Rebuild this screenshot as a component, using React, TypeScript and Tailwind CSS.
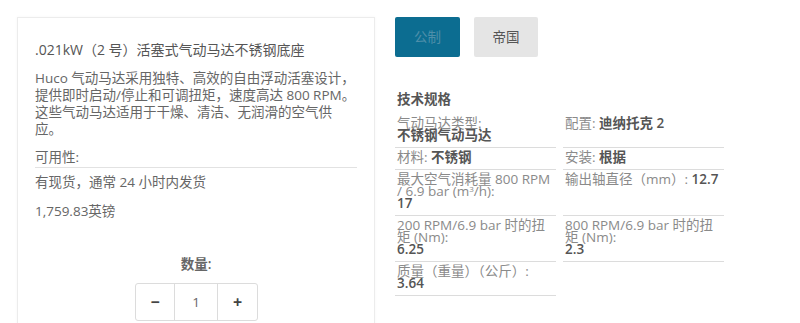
const font = { fontFamily: '"Open Sans", "Noto Sans CJK SC", sans-serif' };

type Spec = { label: React.ReactNode; value: string; block?: boolean };

const specs: (Spec | null)[][] = [
  [
    { label: '气动马达类型:', value: '不锈钢气动马达', block: true },
    { label: '配置:', value: '迪纳托克 2' },
  ],
  [
    { label: '材料:', value: '不锈钢' },
    { label: '安装:', value: '根据' },
  ],
  [
    {
      label: (
        <>
          最大空气消耗量 800 RPM
          <br />/ 6.9 bar (m<sup className="text-[8px]">3</sup>/h):
        </>
      ),
      value: '17',
      block: true,
    },
    { label: '输出轴直径（mm）:', value: '12.7' },
  ],
  [
    {
      label: (
        <>
          200 RPM/6.9 bar 时的扭
          <br />矩 (Nm):
        </>
      ),
      value: '6.25',
      block: true,
    },
    {
      label: (
        <>
          800 RPM/6.9 bar 时的扭
          <br />矩 (Nm):
        </>
      ),
      value: '2.3',
      block: true,
    },
  ],
  [{ label: '质量（重量）（公斤）:', value: '3.64', block: true }, null],
];

function SpecCell({ spec }: { spec: Spec | null }) {
  if (!spec) return <div className="w-[161px]" />;
  return (
    <div className="w-[161px] border-b border-[#dcdcdc] pl-[2px] pt-[3px] pb-[6px] text-[13.5px] leading-[12px]">
      <span className="text-[#8a8a8a]">{spec.label}</span>{' '}
      <span className={`font-semibold text-[#555] ${spec.block ? 'block' : ''}`}>{spec.value}</span>
    </div>
  );
}

export default function App() {
  return (
    <div className="flex h-[323px] w-[800px] overflow-hidden bg-white" style={font}>
      <div className="ml-[17px] mt-[17px] h-[340px] w-[358px] border border-[#ececec] bg-white px-[17px] pt-[23px] shadow-[0_0_3px_rgba(0,0,0,0.04)]">
        <h1 className="text-[14px] leading-[17px] text-[#555]">.021kW（2 号）活塞式气动马达不锈钢底座</h1>
        <p className="mt-[12px] whitespace-nowrap text-[13.5px] leading-[17px] text-[#666]">
          Huco 气动马达采用独特、高效的自由浮动活塞设计，
          <br />
          提供即时启动/停止和可调扭矩，速度高达 800 RPM。
          <br />
          这些气动马达适用于干燥、清洁、无润滑的空气供
          <br />
          应。
        </p>
        <div className="mt-[11px] border-b border-[#e2e2e2] pb-[1px] text-[13.5px] leading-[17px] text-[#666]">可用性:</div>
        <div className="mt-[6px] text-[13.5px] leading-[17px] text-[#666]">有现货，通常 24 小时内发货</div>
        <div className="mt-[12px] text-[13.5px] leading-[17px] text-[#666]">1,759.83英镑</div>
        <div className="mt-[36px] text-center text-[13.5px] font-semibold leading-[17px] text-[#666]">数量:</div>
        <div className="mt-[10px] flex justify-center">
          <div className="ml-[1px] flex h-[38px] overflow-hidden rounded-[3px] border border-[#dcdcdc]">
            <button className="flex w-[39px] items-center justify-center border-r border-[#dcdcdc] text-[16px] font-bold text-[#444]">−</button>
            <div className="flex w-[43px] items-center justify-center border-r border-[#dcdcdc] text-[13.5px] text-[#666]">1</div>
            <button className="flex w-[39px] items-center justify-center text-[16px] font-bold text-[#444]">+</button>
          </div>
        </div>
      </div>

      <div className="ml-[20px] mt-[17px]">
        <div className="flex gap-[14px]">
          <button className="h-[40px] w-[65px] rounded-[2px] bg-[#0c6d91] text-[13.5px] text-[#4f8faa]">公制</button>
          <button className="h-[40px] w-[64px] rounded-[2px] bg-[#e5e5e5] text-[13.5px] text-[#555]">帝国</button>
        </div>
        <div className="mt-[34px] pl-[2px] text-[13.5px] font-semibold leading-[17px] text-[#555]">技术规格</div>
        <div className="mt-[6px] flex flex-col">
          {specs.map((row, i) => (
            <div key={i} className="flex gap-[7px]">
              <SpecCell spec={row[0]} />
              <SpecCell spec={row[1]} />
            </div>
          ))}
        </div>
      </div>
    </div>
  );
}
